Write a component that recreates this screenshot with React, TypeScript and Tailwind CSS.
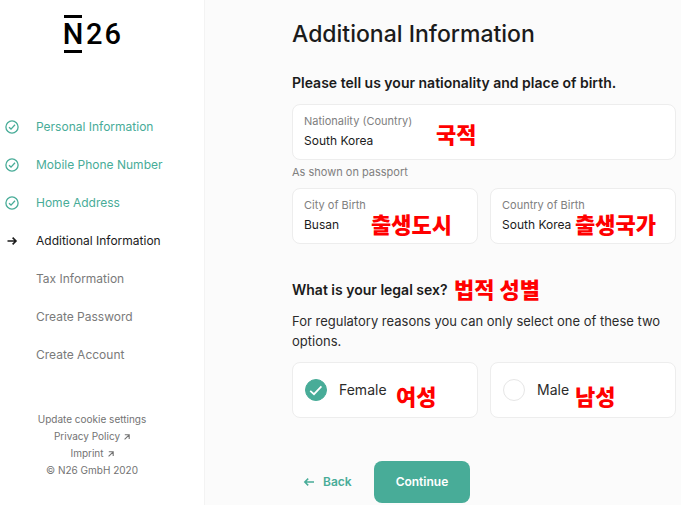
import { useState } from "react";

const steps = [
  { label: "Personal Information", status: "done" },
  { label: "Mobile Phone Number", status: "done" },
  { label: "Home Address", status: "done" },
  { label: "Additional Information", status: "current" },
  { label: "Tax Information", status: "todo" },
  { label: "Create Password", status: "todo" },
  { label: "Create Account", status: "todo" },
];

const stepColors: Record<string, string> = {
  done: "text-[#48ac98]",
  current: "text-[#1b1b1b]",
  todo: "text-[#7a7a7a]",
};

function StepIcon({ status }: { status: string }) {
  if (status === "done") {
    return (
      <svg viewBox="0 0 14 14" className="size-3.5" fill="none" stroke="currentColor" strokeWidth="1.3">
        <circle cx="7" cy="7" r="6.1" />
        <path d="M4 7.3l2 1.8 4-4.3" />
      </svg>
    );
  }
  if (status === "current") {
    return (
      <svg viewBox="0 0 14 14" className="size-3.5" fill="none" stroke="currentColor" strokeWidth="1.6">
        <path d="M2.5 7h8.5M7.6 3.6L11 7l-3.4 3.4" />
      </svg>
    );
  }
  return null;
}

function ExternalArrow() {
  return (
    <svg viewBox="0 0 6 6" className="size-1.5" fill="none" stroke="currentColor" strokeWidth="1.1">
      <path d="M.8.8h4.4V5M5.2.8L.6 5.4" />
    </svg>
  );
}

function Note({ text, className }: { text: string; className: string }) {
  return (
    <span
      className={`absolute whitespace-nowrap font-['Noto_Sans_CJK_KR',sans-serif] text-[22px] leading-6 font-black text-[#ff0000] pointer-events-none ${className}`}
    >
      {text}
    </span>
  );
}

type FieldProps = { id: string; label: string; value: string; note: string; noteClass: string };

function Field({ id, label, value, note, noteClass }: FieldProps) {
  const [text, setText] = useState(value);

  return (
    <div className="relative h-14 rounded-lg border border-[#ededed] bg-white px-[11px] pt-2">
      <label htmlFor={id} className="block text-[11px] leading-4 text-[#808080]">
        {label}
      </label>
      <input
        id={id}
        value={text}
        onChange={(e) => setText(e.target.value)}
        className="mt-1 block w-full bg-transparent text-xs leading-4 text-[#1b1b1b] outline-none"
      />
      <Note text={note} className={noteClass} />
    </div>
  );
}

type OptionProps = {
  label: string;
  checked: boolean;
  onSelect: () => void;
  note: string;
  noteClass: string;
};

function SexOption({ label, checked, onSelect, note, noteClass }: OptionProps) {
  return (
    <label className="relative flex h-14 cursor-pointer items-center gap-3 rounded-lg border border-[#ededed] bg-white px-3">
      <span className="grid size-[22px] place-items-center">
        <input
          type="radio"
          name="sex"
          checked={checked}
          onChange={onSelect}
          className="col-start-1 row-start-1 size-[22px] appearance-none rounded-full border border-[#e6e6e6] bg-white checked:border-[#48ac98] checked:bg-[#48ac98]"
        />
        {checked && (
          <svg
            viewBox="0 0 22 22"
            className="pointer-events-none col-start-1 row-start-1 size-[22px]"
            fill="none"
            stroke="white"
            strokeWidth="1.7"
          >
            <path d="M5.2 11.8l3.8 3.4 7.4-7.9" />
          </svg>
        )}
      </span>
      <span className="text-sm leading-5 text-[#2b2b2b]">{label}</span>
      <Note text={note} className={noteClass} />
    </label>
  );
}

export default function App() {
  const [sex, setSex] = useState("female");

  return (
    <div className="flex min-h-screen bg-[#fbfbfb] font-[Inter,sans-serif] text-[#1b1b1b]">
      {/* Sidebar */}
      <aside className="w-[205px] shrink-0 border-r border-[#f3f3f3] bg-white pt-[15px]">
        <div className="ml-16 flex items-center font-[Roboto,sans-serif] text-[29px] leading-8 font-medium text-black">
          <span className="flex w-[18px] justify-center border-y-3 border-black">N</span>
          <span className="ml-1">2</span>
          <span className="ml-0.5">6</span>
        </div>

        <nav className="mt-[55px]">
          <ol>
            {steps.map((step) => (
              <li
                key={step.label}
                className={`flex h-[38px] items-center gap-[17px] pl-[5px] text-xs ${stepColors[step.status]}`}
              >
                <span className="size-3.5 shrink-0">
                  <StepIcon status={step.status} />
                </span>
                <span>{step.label}</span>
              </li>
            ))}
          </ol>
        </nav>

        <footer className="mt-[37px] flex flex-col items-center pr-5 text-[10px] leading-[17px] text-[#737373]">
          <button type="button">Update cookie settings</button>
          <a href="#privacy" className="flex items-center gap-1">
            Privacy Policy <ExternalArrow />
          </a>
          <a href="#imprint" className="flex items-center gap-1">
            Imprint <ExternalArrow />
          </a>
          <span>© N26 GmbH 2020</span>
        </footer>
      </aside>

      {/* Form */}
      <main className="min-w-0 flex-1 pt-5 pr-[5px] pl-[87px]">
        <form onSubmit={(e) => e.preventDefault()}>
          <h1 className="text-[23px] leading-7 font-medium">Additional Information</h1>

          <h2 className="mt-[25px] text-sm leading-5 font-semibold">
            Please tell us your nationality and place of birth.
          </h2>
          <div className="mt-[11px]">
            <Field
              id="nationality"
              label="Nationality (Country)"
              value="South Korea"
              note="국적"
              noteClass="left-[143px] top-4"
            />
          </div>
          <p className="mt-1 text-[11px] leading-4 text-[#808080]">As shown on passport</p>

          <div className="mt-2 grid grid-cols-2 gap-3">
            <Field
              id="city"
              label="City of Birth"
              value="Busan"
              note="출생도시"
              noteClass="left-[78px] top-[22px]"
            />
            <Field
              id="country"
              label="Country of Birth"
              value="South Korea"
              note="출생국가"
              noteClass="left-[84px] top-[22px]"
            />
          </div>

          <h2 className="relative mt-9 text-sm leading-5 font-semibold">
            What is your legal sex?
            <Note text="법적 성별" className="left-[162px] -top-1" />
          </h2>
          <p className="mt-[11px] text-[13px] leading-5 text-[#2b2b2b]">
            For regulatory reasons you can only select one of these two options.
          </p>

          <div className="mt-[11px] grid grid-cols-2 gap-3">
            <SexOption
              label="Female"
              checked={sex === "female"}
              onSelect={() => setSex("female")}
              note="여성"
              noteClass="left-[103px] top-5"
            />
            <SexOption
              label="Male"
              checked={sex === "male"}
              onSelect={() => setSex("male")}
              note="남성"
              noteClass="left-[84px] top-5"
            />
          </div>

          <div className="mt-[43px] flex items-center gap-[22px] pl-[11px] text-xs font-semibold">
            <button type="button" className="flex items-center gap-2 text-[#48ac98]">
              <svg viewBox="0 0 12 12" className="size-3" fill="none" stroke="currentColor" strokeWidth="1.5">
                <path d="M11 6H1.8M5.2 2.6L1.8 6l3.4 3.4" />
              </svg>
              Back
            </button>
            <button type="submit" className="h-[42px] rounded-lg bg-[#48ac98] px-[22px] text-white">
              Continue
            </button>
          </div>
        </form>
      </main>
    </div>
  );
}
